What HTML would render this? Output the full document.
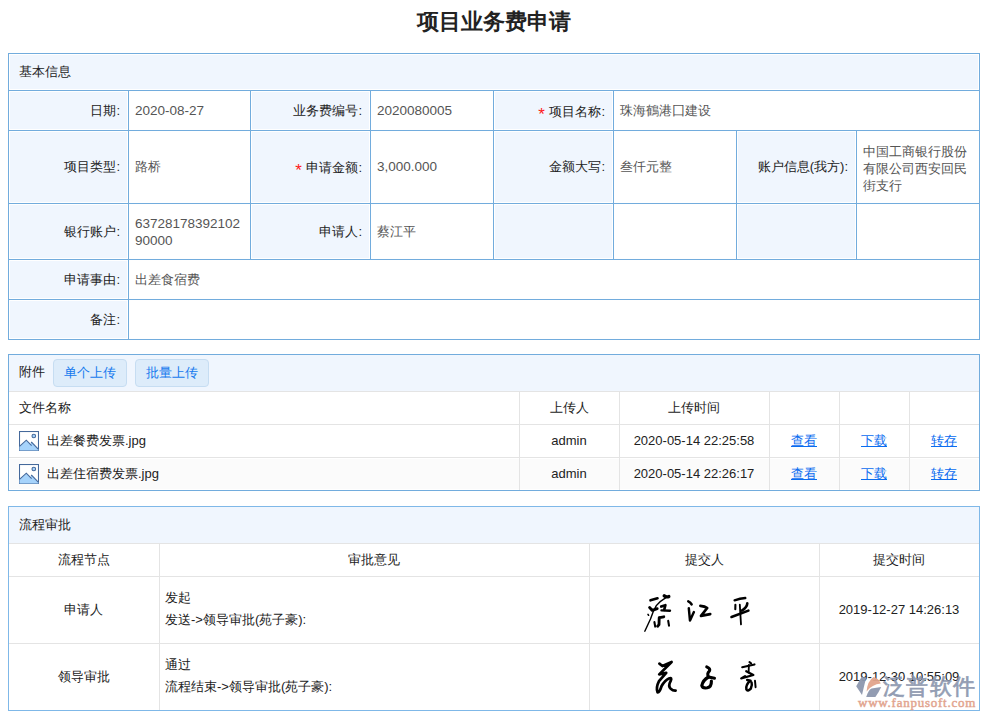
<!DOCTYPE html>
<html><head><meta charset="utf-8">
<style>
*{margin:0;padding:0;box-sizing:border-box;}
html,body{width:986px;height:719px;overflow:hidden;background:#fff;}
body{font-family:"Liberation Sans",sans-serif;font-size:13px;color:#222;position:relative;}
.a{position:absolute;}
.t{position:absolute;white-space:nowrap;line-height:18px;margin-top:1px;}
.n{font-size:13.5px;}
.r{text-align:right;}
.c{text-align:center;}
.v{color:#555;}
.title{position:absolute;left:1px;width:986px;top:7px;text-align:center;font-size:22px;font-weight:bold;color:#222;line-height:30px;}
.req{color:#ff1a1a;font-size:17px;position:relative;top:4px;margin-right:1px;}
.btn{position:absolute;top:359px;height:28px;border:1px solid #c6ddf2;background:#ddecfa;border-radius:4px;color:#1479ee;line-height:25px;text-align:center;}
.lnk{color:#0a6cf0;text-decoration:underline;}
</style></head><body>
<div class="title">项目业务费申请</div>

<div class="a" style="left:10px;top:55px;width:968px;height:34px;background:#f0f6fe"></div>
<div class="a" style="left:10px;top:92px;width:117px;height:37px;background:#f0f6fe"></div>
<div class="a" style="left:252px;top:92px;width:117px;height:37px;background:#f0f6fe"></div>
<div class="a" style="left:495px;top:92px;width:117px;height:37px;background:#f0f6fe"></div>
<div class="a" style="left:10px;top:132px;width:117px;height:70px;background:#f0f6fe"></div>
<div class="a" style="left:252px;top:132px;width:117px;height:70px;background:#f0f6fe"></div>
<div class="a" style="left:495px;top:132px;width:117px;height:70px;background:#f0f6fe"></div>
<div class="a" style="left:738px;top:132px;width:117px;height:70px;background:#f0f6fe"></div>
<div class="a" style="left:10px;top:205px;width:117px;height:53px;background:#f0f6fe"></div>
<div class="a" style="left:252px;top:205px;width:117px;height:53px;background:#f0f6fe"></div>
<div class="a" style="left:495px;top:205px;width:117px;height:53px;background:#f0f6fe"></div>
<div class="a" style="left:738px;top:205px;width:117px;height:53px;background:#f0f6fe"></div>
<div class="a" style="left:10px;top:261px;width:117px;height:37px;background:#f0f6fe"></div>
<div class="a" style="left:10px;top:301px;width:117px;height:37px;background:#f0f6fe"></div>
<div class="a" style="left:8px;top:53px;width:972px;height:1px;background:#72acdd"></div>
<div class="a" style="left:8px;top:90px;width:972px;height:1px;background:#72acdd"></div>
<div class="a" style="left:8px;top:130px;width:972px;height:1px;background:#72acdd"></div>
<div class="a" style="left:8px;top:203px;width:972px;height:1px;background:#72acdd"></div>
<div class="a" style="left:8px;top:259px;width:972px;height:1px;background:#72acdd"></div>
<div class="a" style="left:8px;top:299px;width:972px;height:1px;background:#72acdd"></div>
<div class="a" style="left:8px;top:339px;width:972px;height:1px;background:#72acdd"></div>
<div class="a" style="left:8px;top:53px;width:1px;height:287px;background:#72acdd"></div>
<div class="a" style="left:979px;top:53px;width:1px;height:287px;background:#72acdd"></div>
<div class="a" style="left:128px;top:90px;width:1px;height:170px;background:#72acdd"></div>
<div class="a" style="left:250px;top:90px;width:1px;height:170px;background:#72acdd"></div>
<div class="a" style="left:370px;top:90px;width:1px;height:170px;background:#72acdd"></div>
<div class="a" style="left:493px;top:90px;width:1px;height:170px;background:#72acdd"></div>
<div class="a" style="left:613px;top:90px;width:1px;height:170px;background:#72acdd"></div>
<div class="a" style="left:736px;top:130px;width:1px;height:130px;background:#72acdd"></div>
<div class="a" style="left:856px;top:130px;width:1px;height:130px;background:#72acdd"></div>
<div class="a" style="left:128px;top:259px;width:1px;height:81px;background:#72acdd"></div>
<div class="t " style="left:19px;top:62px;">基本信息</div>
<div class="t r " style="right:866px;top:101px;">日期:</div>
<div class="t v" style="left:135px;top:101px;"><span class="n">2020-08-27</span></div>
<div class="t r " style="right:624px;top:101px;">业务费编号:</div>
<div class="t v" style="left:377px;top:101px;"><span class="n">2020080005</span></div>
<div class="t r " style="right:381px;top:101px;"><span class="req">*</span>&nbsp;项目名称:</div>
<div class="t v" style="left:620px;top:101px;">珠海鶴港囗建设</div>
<div class="t r " style="right:866px;top:157px;">项目类型:</div>
<div class="t v" style="left:135px;top:157px;">路桥</div>
<div class="t r " style="right:624px;top:157px;"><span class="req">*</span>&nbsp;申请金额:</div>
<div class="t v" style="left:377px;top:157px;"><span class="n">3,000.000</span></div>
<div class="t r " style="right:381px;top:157px;">金额大写:</div>
<div class="t v" style="left:620px;top:157px;">叁仟元整</div>
<div class="t r " style="right:138px;top:157px;">账户信息(我方):</div>
<div class="t v" style="left:863px;top:142px;white-space:normal;width:110px;line-height:17px;">中国工商银行股份<br>有限公司西安回民<br>街支行</div>
<div class="t r " style="right:866px;top:222px;">银行账户:</div>
<div class="t v" style="left:135px;top:214px;line-height:17px;font-size:13.5px;">63728178392102<br>90000</div>
<div class="t r " style="right:624px;top:222px;">申请人:</div>
<div class="t v" style="left:377px;top:222px;">蔡江平</div>
<div class="t r " style="right:866px;top:270px;">申请事由:</div>
<div class="t v" style="left:135px;top:270px;">出差食宿费</div>
<div class="t r " style="right:866px;top:310px;">备注:</div>
<div class="a" style="left:9px;top:355px;width:970px;height:36px;background:#f0f6fe"></div>
<div class="a" style="left:8px;top:354px;width:972px;height:1px;background:#72acdd"></div>
<div class="a" style="left:8px;top:490px;width:972px;height:1px;background:#72acdd"></div>
<div class="a" style="left:8px;top:354px;width:1px;height:137px;background:#72acdd"></div>
<div class="a" style="left:979px;top:354px;width:1px;height:137px;background:#72acdd"></div>
<div class="a" style="left:10px;top:459px;width:968px;height:30px;background:#fbfbfb"></div>
<div class="a" style="left:9px;top:391px;width:970px;height:1px;background:#e4e4e4"></div>
<div class="a" style="left:9px;top:424px;width:970px;height:1px;background:#e4e4e4"></div>
<div class="a" style="left:9px;top:457px;width:970px;height:1px;background:#e4e4e4"></div>
<div class="a" style="left:519px;top:391px;width:1px;height:99px;background:#e4e4e4"></div>
<div class="a" style="left:619px;top:391px;width:1px;height:99px;background:#e4e4e4"></div>
<div class="a" style="left:769px;top:391px;width:1px;height:99px;background:#e4e4e4"></div>
<div class="a" style="left:839px;top:391px;width:1px;height:99px;background:#e4e4e4"></div>
<div class="a" style="left:909px;top:391px;width:1px;height:99px;background:#e4e4e4"></div>
<div class="t " style="left:19px;top:362px;">附件</div>
<div class="btn" style="left:53px;width:74px;">单个上传</div>
<div class="btn" style="left:135px;width:74px;">批量上传</div>
<div class="t " style="left:19px;top:398px;">文件名称</div>
<div class="t c " style="left:519px;width:100px;top:398px;">上传人</div>
<div class="t c " style="left:619px;width:150px;top:398px;">上传时间</div>
<svg class="a" style="left:19px;top:431px" width="20" height="20" viewBox="0 0 20 20"><rect x="0.5" y="0.5" width="19" height="19" fill="#fff" stroke="#45699b" stroke-width="1.1"/><path d="M0.5 15.4 L7.3 9.2 L11.2 13.2 L12.7 11.3 L19.5 18.3 L19.5 19.5 L0.5 19.5 Z" fill="#a6d3fb"/><path d="M0.5 15.4 L7.3 9.2 L12.6 14.6 M12.1 11.9 L12.7 11.3 L19.5 18.3" fill="none" stroke="#45699b" stroke-width="1.1"/><circle cx="14.8" cy="5" r="1.8" fill="#a6d3fb" stroke="#45699b" stroke-width="1.1"/></svg>
<div class="t " style="left:47px;top:431px;">出差餐费发票.jpg</div>
<div class="t c " style="left:519px;width:100px;top:431px;">admin</div>
<div class="t c " style="left:619px;width:150px;top:431px;">2020-05-14 22:25:58</div>
<div class="t c " style="left:769px;width:70px;top:431px;"><span class="lnk">查看</span></div>
<div class="t c " style="left:839px;width:70px;top:431px;"><span class="lnk">下载</span></div>
<div class="t c " style="left:909px;width:70px;top:431px;"><span class="lnk">转存</span></div>
<svg class="a" style="left:19px;top:464px" width="20" height="20" viewBox="0 0 20 20"><rect x="0.5" y="0.5" width="19" height="19" fill="#fff" stroke="#45699b" stroke-width="1.1"/><path d="M0.5 15.4 L7.3 9.2 L11.2 13.2 L12.7 11.3 L19.5 18.3 L19.5 19.5 L0.5 19.5 Z" fill="#a6d3fb"/><path d="M0.5 15.4 L7.3 9.2 L12.6 14.6 M12.1 11.9 L12.7 11.3 L19.5 18.3" fill="none" stroke="#45699b" stroke-width="1.1"/><circle cx="14.8" cy="5" r="1.8" fill="#a6d3fb" stroke="#45699b" stroke-width="1.1"/></svg>
<div class="t " style="left:47px;top:464px;">出差住宿费发票.jpg</div>
<div class="t c " style="left:519px;width:100px;top:464px;">admin</div>
<div class="t c " style="left:619px;width:150px;top:464px;">2020-05-14 22:26:17</div>
<div class="t c " style="left:769px;width:70px;top:464px;"><span class="lnk">查看</span></div>
<div class="t c " style="left:839px;width:70px;top:464px;"><span class="lnk">下载</span></div>
<div class="t c " style="left:909px;width:70px;top:464px;"><span class="lnk">转存</span></div>
<div class="a" style="left:9px;top:507px;width:970px;height:36px;background:#f0f6fe"></div>
<div class="a" style="left:8px;top:506px;width:972px;height:1px;background:#7fb8e8"></div>
<div class="a" style="left:8px;top:710px;width:972px;height:1px;background:#7fb8e8"></div>
<div class="a" style="left:8px;top:506px;width:1px;height:205px;background:#7fb8e8"></div>
<div class="a" style="left:979px;top:506px;width:1px;height:205px;background:#7fb8e8"></div>
<div class="a" style="left:9px;top:543px;width:970px;height:1px;background:#e4e4e4"></div>
<div class="a" style="left:9px;top:576px;width:970px;height:1px;background:#e4e4e4"></div>
<div class="a" style="left:9px;top:643px;width:970px;height:1px;background:#e4e4e4"></div>
<div class="a" style="left:159px;top:543px;width:1px;height:167px;background:#e4e4e4"></div>
<div class="a" style="left:589px;top:543px;width:1px;height:167px;background:#e4e4e4"></div>
<div class="a" style="left:819px;top:543px;width:1px;height:167px;background:#e4e4e4"></div>
<div class="t " style="left:19px;top:515px;">流程审批</div>
<div class="t c " style="left:8px;width:151px;top:550px;">流程节点</div>
<div class="t c " style="left:159px;width:430px;top:550px;">审批意见</div>
<div class="t c " style="left:589px;width:230px;top:550px;">提交人</div>
<div class="t c " style="left:819px;width:160px;top:550px;">提交时间</div>
<div class="t c " style="left:8px;width:151px;top:600px;">申请人</div>
<div class="t c " style="left:8px;width:151px;top:667px;">领导审批</div>
<div class="t" style="left:165px;top:586px;line-height:22px;">发起<br>发送-&gt;领导审批(苑子豪):</div>
<div class="t" style="left:165px;top:653px;line-height:22px;">通过<br>流程结束-&gt;领导审批(苑子豪):</div>
<div class="t c " style="left:819px;width:160px;top:600px;">2019-12-27 14:26:13</div>
<div class="t c " style="left:819px;width:160px;top:667px;">2019-12-30 10:55:09</div>
<svg class="a" style="left:0;top:0" width="986" height="719" viewBox="0 0 986 719" fill="none" stroke="#000" stroke-linecap="round" stroke-linejoin="round">
<!-- 蔡 -->
<path d="M650.5 600.3 L657.5 598.3" stroke-width="2.6"/>
<path d="M664.2 595.8 Q666 597.5 668.8 596.6" stroke-width="3.38"/>
<path d="M667 596.8 Q660 601 656.3 605.6 Q653 611 650.5 619 L644.8 631.2" stroke-width="1.43"/>
<path d="M649.6 607.6 L652.3 610.4 L657.2 608.6" stroke-width="2.86"/>
<path d="M661.2 606.6 L665.4 605.2 L664.2 609.8" stroke-width="2.6"/><path d="M661.5 610.4 L670 610.8" stroke-width="2.4"/>
<path d="M648 614.3 L648.6 615.3" stroke-width="1.56"/>
<path d="M659.6 617.6 L663.8 616.8 M659.2 617.8 L659 624.6 L657.6 626.2" stroke-width="2.86"/>
<path d="M654.4 622 L655.2 626.6" stroke-width="2.08"/>
<path d="M668.2 620.8 L669 625.6" stroke-width="2.08"/>
<!-- 江 -->
<path d="M688.3 601.4 Q690.5 602.4 691.6 604.4" stroke-width="2.60"/>
<path d="M688.8 608.2 L690 620.6 L693.9 612" stroke-width="2.47"/>
<path d="M700.4 605.8 Q705 606.2 707.2 608 L701 615.9 L710.2 614.1" stroke-width="2.73"/>
<!-- 平 -->
<path d="M734.6 600.4 Q740 598.5 745.3 598" stroke-width="2.34"/>
<path d="M735.4 604.8 L735.3 609.2" stroke-width="2.08"/>
<path d="M747.3 603.4 Q747 607.5 741.8 610.6" stroke-width="2.60"/>
<path d="M731.5 617 L748.4 610.6" stroke-width="2.60"/>
<path d="M739.8 604.6 L741 624.4" stroke-width="1.82"/>
<!-- 苑 -->
<path d="M659.4 663.6 L662.4 666 L671.6 662 L659.2 674.4 L666.2 672.8 L659 681.2 Q655.6 688 657.6 692.4 Q659.8 692 661.6 686 Q665 680 668.9 678.4 Q672.5 677 670.6 681.2 Q668 686 670.4 688.4 Q673 690.8 675.6 690.6" stroke-width="2.73"/>
<!-- 子 -->
<path d="M706.7 666.8 Q710.5 668.5 709.6 670.8 Q706.5 673.5 708.6 677 L714.5 678.2" stroke-width="2.99"/>
<path d="M708.6 677 Q703 680 701.8 685.6 Q702.5 688.5 707.2 687.8 Q711.6 687 711.4 681" stroke-width="3.12"/>
<!-- 豪 -->
<path d="M749.5 662.2 L751.1 663.3" stroke-width="2.08"/>
<path d="M742.2 667.2 L754.5 664.4" stroke-width="2.08"/>
<path d="M748.9 665 L748.6 672.6" stroke-width="1.82"/>
<path d="M746.2 671.2 L753.4 675 L741.2 678.4 L745 676.1" stroke-width="2.21"/>
<path d="M747.2 680 L750.6 680.6 Q745.5 684.5 746.4 689.5 Q747.6 692 750.8 688.6 Q752.5 685 751.6 682.6" stroke-width="2.47"/>
<path d="M755 680.8 L755.6 687.2" stroke-width="1.95"/>
</svg>
<svg class="a" style="left:0;top:0" width="986" height="719" viewBox="0 0 986 719">
<path d="M861.6 676.8 L866.2 677.8 L864.6 684 L862 695 L856.2 686.3 Z" fill="#8c97ae" fill-opacity="0.95"/>
<path d="M866.6 691.4 Q867.5 681 873.6 677.1 Q878.8 678.5 880.8 683.6 Q872 684.5 866.6 691.4 Z" fill="#e2a48c" fill-opacity="0.95"/>
<path d="M866.2 697.1 Q868.5 690 871.5 688.6 L881.2 687.1 Q878.5 693 875.4 697.1 Z" fill="#8c97ae" fill-opacity="0.95"/>
</svg>
<div class="a" style="left:883px;top:672px;font-size:22px;letter-spacing:1.4px;opacity:0.9;line-height:30px;color:#8893ab;font-weight:normal;-webkit-text-stroke:0.7px #8893ab;white-space:nowrap;">泛普软件</div>
<div class="a" style="left:858px;top:695px;font-family:'Liberation Serif',serif;font-size:13px;font-weight:normal;-webkit-text-stroke:0.45px #e2a48e;line-height:16px;color:#e2a48e;letter-spacing:0.75px;white-space:nowrap;">www.fanpusoft.com</div>
</body></html>
